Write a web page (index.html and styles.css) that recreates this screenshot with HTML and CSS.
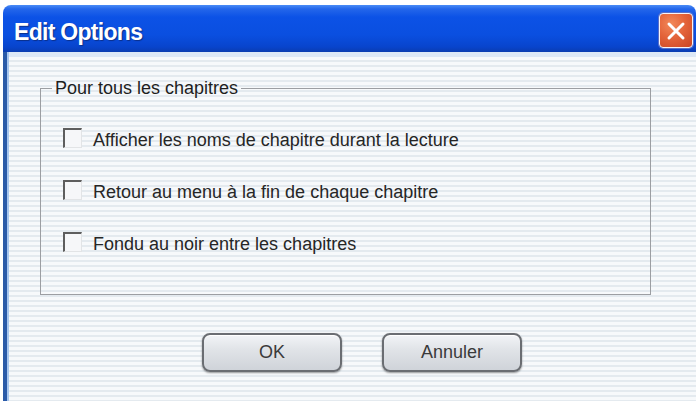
FILE: index.html
```html
<!DOCTYPE html>
<html>
<head>
<meta charset="utf-8">
<link rel="stylesheet" href="styles.css">
</head>
<body>
<div class="window">
  <div class="titlebar">
    <span class="title">Edit Options</span>
    <span class="close">
      <svg width="22" height="22" viewBox="0 0 22 22"><path d="M4 4 L18 18 M18 4 L4 18" stroke="#fff" stroke-width="3" stroke-linecap="round"/></svg>
    </span>
  </div>
  <div class="client">
    <fieldset class="group">
      <legend class="legend">Pour tous les chapitres</legend>
      <div class="rows">
        <label class="row"><span class="check"></span><span class="label">Afficher les noms de chapitre durant la lecture</span></label>
        <label class="row"><span class="check"></span><span class="label">Retour au menu à la fin de chaque chapitre</span></label>
        <label class="row"><span class="check"></span><span class="label">Fondu au noir entre les chapitres</span></label>
      </div>
    </fieldset>
    <div class="buttons">
      <button class="btn">OK</button>
      <button class="btn">Annuler</button>
    </div>
  </div>
</div>
</body>
</html>
```
FILE: styles.css
```css
html, body {
  margin: 0;
  padding: 0;
  background: #ffffff;
  width: 696px;
  height: 401px;
  overflow: hidden;
}
.window {
  margin: 5px 0 0 3px;
  height: 396px;
  display: flex;
  flex-direction: column;
  font-family: "Liberation Sans", Arial, sans-serif;
}
.titlebar {
  height: 47px;
  flex: none;
  box-sizing: border-box;
  border-radius: 8px 8px 0 0;
  background: linear-gradient(to bottom, #4a8cf6 0px, #2466ea 4px, #0c52e6 12px, #0a4fe0 30px, #0844cc 42px, #0a3cb0 47px);
  display: flex;
  align-items: center;
  justify-content: space-between;
  padding: 4px 3px 0 11px;
}
.title {
  color: #ffffff;
  font-weight: bold;
  font-size: 23px;
  letter-spacing: -0.7px;
  text-shadow: 1px 1px 1px #0b2f8a;
  padding-top: 3px;
}
.close {
  width: 32px;
  height: 33px;
  border: 1.5px solid #f4f4f8;
  border-radius: 4px;
  background: radial-gradient(circle at 35% 30%, #f2895a 0%, #e4643a 45%, #c94424 100%);
  display: flex;
  align-items: center;
  justify-content: center;
  box-shadow: 0 0 0 1px #5a6fc8;
}
.client {
  flex: 1;
  border-left: 4px solid #2a5aa8;
  box-shadow: inset 2px 0 0 #a8c6ee, inset 0 5px 0 #dde8f6;
  background: repeating-linear-gradient(to bottom, #f7f9fb 0px, #f7f9fb 3px, #e4eaef 3px, #e4eaef 5px);
  padding: 26px 45px 0 33px;
  display: flex;
  flex-direction: column;
}
.group {
  margin: 0;
  border: 1px solid #9c9ea2;
  padding: 31px 0 39px 0;
}
.legend {
  margin-left: 11px;
  padding: 0 3px;
  font-size: 18px;
  line-height: 20px;
  color: #1e1e1e;
}
.rows {
  display: flex;
  flex-direction: column;
  gap: 30px;
  padding-left: 22px;
}
.row {
  display: flex;
  align-items: center;
  gap: 11px;
  height: 22px;
  font-size: 18px;
  color: #262626;
}
.check {
  width: 16px;
  height: 17px;
  border-top: 2px solid #5e5e5e;
  border-left: 2px solid #5e5e5e;
  border-right: 1px solid #e2e4e6;
  border-bottom: 1px solid #e2e4e6;
  background: #f6f7f9;
  margin-top: -4px;
}
.buttons {
  display: flex;
  justify-content: center;
  gap: 40px;
  margin-top: 38px;
  padding-left: 33px;
}
.btn {
  width: 140px;
  height: 39px;
  border: 2px solid #6a6d72;
  border-radius: 8px;
  background: linear-gradient(to bottom, #f2f4f7 0%, #e1e4e8 40%, #cfd3d9 100%);
  box-shadow: inset 0 1px 0 #ffffff, 0 1px 2px rgba(0,0,0,0.4);
  font-family: "Liberation Sans", Arial, sans-serif;
  font-size: 18px;
  color: #3a3a3a;
  padding: 0;
}
```
